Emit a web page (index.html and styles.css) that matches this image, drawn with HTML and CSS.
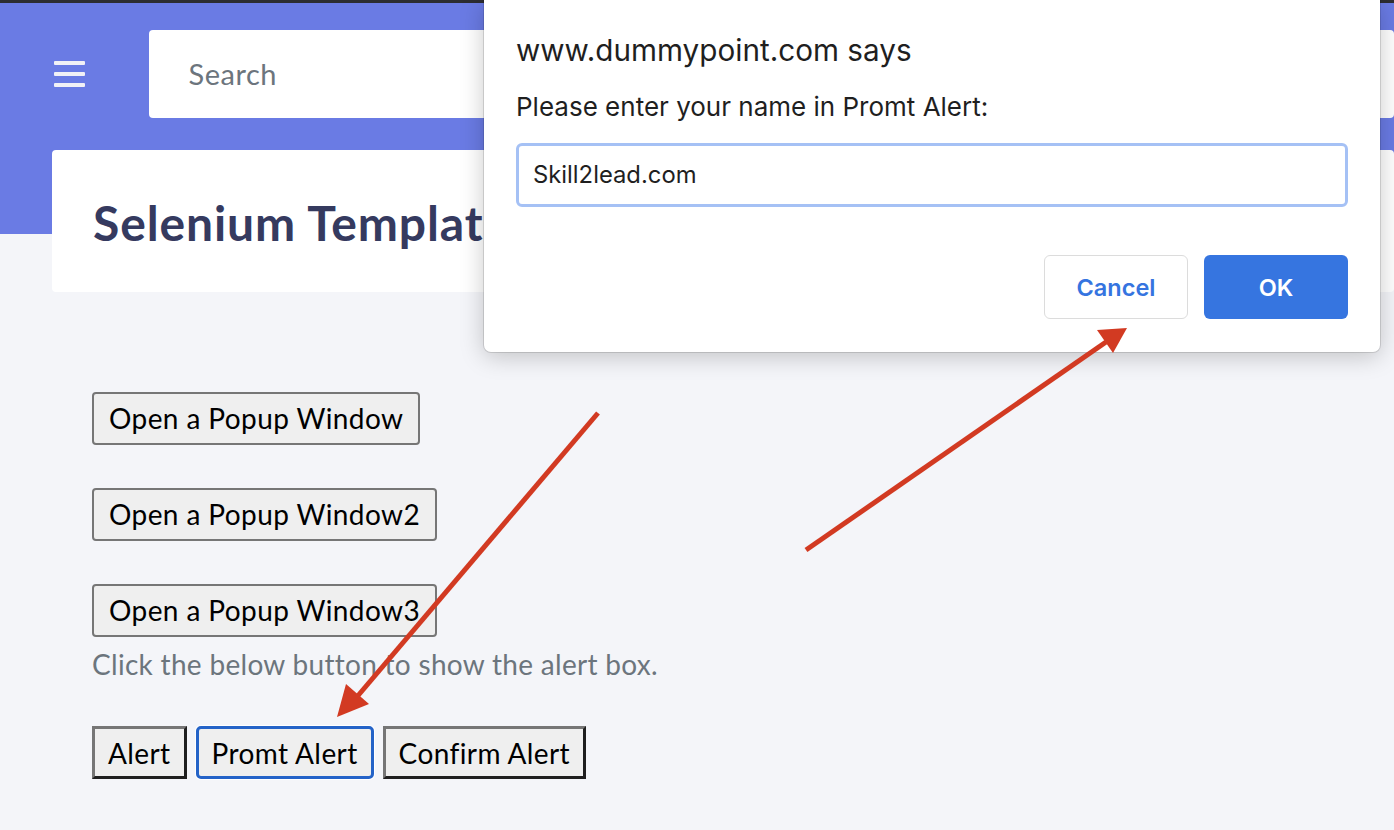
FILE: index.html
```html
<!DOCTYPE html>
<html>
<head>
<meta charset="utf-8">
<link rel="stylesheet" href="styles.css">
</head>
<body>
<div class="topstrip"></div>
<header class="header">
  <div class="topbar">
    <div class="burger"><span></span><span></span><span></span></div>
    <div class="search">Search</div>
  </div>
</header>
<main class="main">
  <div class="card"><h1 class="title">Selenium Template</h1></div>
  <section class="content">
    <div class="row"><button class="btn">Open a Popup Window</button></div>
    <div class="row"><button class="btn">Open a Popup Window2</button></div>
    <div class="row"><button class="btn">Open a Popup Window3</button></div>
    <p class="hint">Click the below button to show the alert box.</p>
    <div class="alerts">
      <button class="abtn">Alert</button>
      <button class="abtn focus">Promt Alert</button>
      <button class="abtn">Confirm Alert</button>
    </div>
  </section>
</main>

<div class="dialog">
  <div class="d-title">www.dummypoint.com says</div>
  <div class="d-msg">Please enter your name in Promt Alert:</div>
  <div class="d-input">Skill2lead.com</div>
  <div class="d-actions">
    <button class="d-cancel">Cancel</button>
    <button class="d-ok">OK</button>
  </div>
</div>

<svg class="arrows" width="1394" height="830" viewBox="0 0 1394 830">
  <g stroke="#d23a22" stroke-width="5" fill="none">
    <line x1="598" y1="413" x2="356" y2="698"/>
    <line x1="806" y1="550" x2="1106" y2="342"/>
  </g>
  <g fill="#d23a22">
    <polygon points="337,717 346,684 369,704"/>
    <polygon points="1127,328 1097,330 1113,353"/>
  </g>
</svg>
</body>
</html>
```
FILE: styles.css
```css
html, body {
  margin: 0;
  padding: 0;
}
body {
  width: 1394px;
  height: 830px;
  overflow: hidden;
  background: #f4f5f9;
  font-family: Lato, "Noto Sans", sans-serif;
  position: relative;
}
.topstrip {
  height: 3px;
  background: #2c2d31;
}
.header {
  background: #6a7be4;
  height: 231px;
}
.topbar {
  display: flex;
  align-items: flex-start;
  padding-top: 27px;
}
.burger {
  width: 32px;
  margin: 31px 0 0 54px;
  display: flex;
  flex-direction: column;
  gap: 7px;
}
.burger span {
  display: block;
  height: 4px;
  border-radius: 1px;
  background: #f1f1f6;
}
.search {
  margin-left: 64px;
  width: 1300px;
  height: 88px;
  background: #fff;
  border-radius: 4px;
  box-sizing: border-box;
  padding: 0 40px;
  line-height: 88px;
  font-size: 29px;
  letter-spacing: 0.5px;
  color: #6c757d;
}
.main {
  padding-left: 52px;
  margin-top: -84px;
}
.card {
  background: #fff;
  border-radius: 4px;
  height: 142px;
  padding-left: 41px;
  display: flex;
  align-items: center;
}
.title {
  margin: 0;
  font-size: 48px;
  font-weight: 700;
  letter-spacing: 0.9px;
  color: #353a5f;
  padding-top: 2px;
}
.content {
  padding: 100px 0 0 40px;
}
.row {
  height: 96px;
}
.btn {
  font-family: Lato, "Noto Sans", sans-serif;
  font-size: 28px;
  letter-spacing: 0.4px;
  line-height: 31px;
  height: 53px;
  padding: 0 15px;
  background: #efefef;
  color: #000;
  border: 2px solid #767676;
  border-radius: 4px;
}
.hint {
  margin: -34px 0 0 0;
  font-size: 28px;
  letter-spacing: 0.3px;
  line-height: 36px;
  color: #6c757d;
}
.alerts {
  margin-top: 44px;
  display: flex;
  gap: 9px;
}
.abtn {
  font-family: Lato, "Noto Sans", sans-serif;
  font-size: 28px;
  letter-spacing: 0.4px;
  height: 53px;
  padding: 0 13px;
  background: #efefef;
  color: #000;
  border: 3px solid;
  border-color: #767676 #1f1f1f #1f1f1f #767676;
  border-radius: 0;
}
.abtn.focus {
  border: 3px solid #2463c8;
  border-radius: 5px;
  box-shadow: 0 0 0 1px #fff;
}
.dialog {
  position: absolute;
  left: 484px;
  top: 0;
  width: 896px;
  height: 352px;
  box-sizing: border-box;
  background: #fff;
  border-radius: 0 0 7px 7px;
  box-shadow: 0 0 0 1px rgba(0,0,0,0.12), 0 4px 24px rgba(0,0,0,0.22);
  padding: 32px 32px 0 32px;
  font-family: Inter, "Liberation Sans", Arial, sans-serif;
  color: #1f1f1f;
}
.d-title {
  font-size: 29.7px;
  line-height: 36px;
}
.d-msg {
  margin-top: 23px;
  font-size: 26px;
  line-height: 32px;
}
.d-input {
  margin-top: 20px;
  height: 64px;
  box-sizing: border-box;
  border: 3px solid #a5c1f5;
  border-radius: 6px;
  padding: 0 14px;
  line-height: 58px;
  font-size: 23.8px;
  color: #1f1f1f;
}
.d-actions {
  margin-top: 48px;
  display: flex;
  justify-content: flex-end;
  gap: 16px;
}
.d-cancel, .d-ok {
  width: 144px;
  height: 64px;
  border-radius: 6px;
  font-family: Inter, "Liberation Sans", Arial, sans-serif;
  font-size: 23.5px;
  font-weight: 600;
}
.d-cancel {
  background: #fff;
  color: #3574e0;
  border: 1px solid #dcdcdc;
}
.d-ok {
  background: #3675e0;
  color: #fff;
  border: none;
}
.arrows {
  position: absolute;
  left: 0;
  top: 0;
  pointer-events: none;
}
```
